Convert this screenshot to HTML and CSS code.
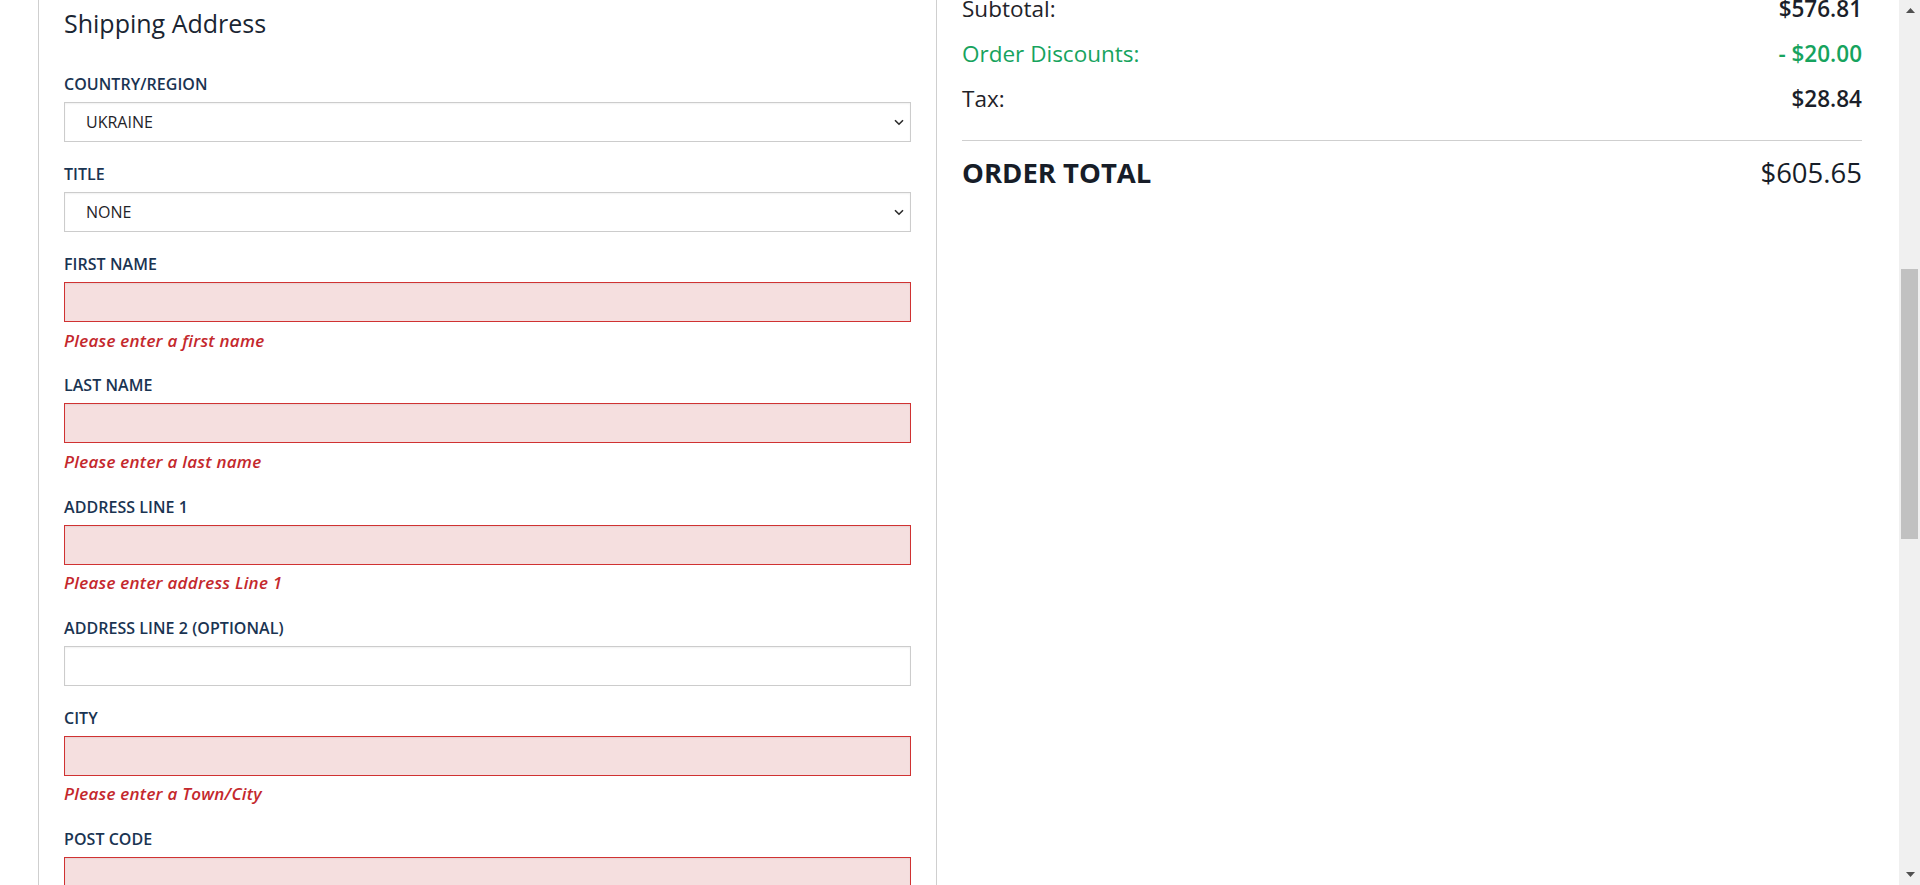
FILE: index.html
```html
<!DOCTYPE html>
<html lang="en">
<head>
<meta charset="utf-8">
<title>Checkout - Shipping Address</title>
<link rel="stylesheet" href="styles.css">
</head>
<body>
<div class="viewport">
  <div class="page">
    <div class="layout">
      <section class="left">
        <h2 class="heading">Shipping Address</h2>

        <div class="field">
          <label class="label" for="country">COUNTRY/REGION</label>
          <div class="select-wrap">
            <select id="country" class="control select"><option>UKRAINE</option></select>
            <svg class="chevron" width="10" height="7" viewBox="0 0 10 7"><polyline points="1,1.2 5,5.2 9,1.2" fill="none" stroke="#2b2b2b" stroke-width="1.6"/></svg>
          </div>
        </div>

        <div class="field">
          <label class="label" for="title">TITLE</label>
          <div class="select-wrap">
            <select id="title" class="control select"><option>NONE</option></select>
            <svg class="chevron" width="10" height="7" viewBox="0 0 10 7"><polyline points="1,1.2 5,5.2 9,1.2" fill="none" stroke="#2b2b2b" stroke-width="1.6"/></svg>
          </div>
        </div>

        <div class="field">
          <label class="label" for="fname">FIRST NAME</label>
          <input id="fname" class="control invalid" type="text">
          <div class="error">Please enter a first name</div>
        </div>

        <div class="field">
          <label class="label" for="lname">LAST NAME</label>
          <input id="lname" class="control invalid" type="text">
          <div class="error">Please enter a last name</div>
        </div>

        <div class="field">
          <label class="label" for="addr1">ADDRESS LINE 1</label>
          <input id="addr1" class="control invalid" type="text">
          <div class="error">Please enter address Line 1</div>
        </div>

        <div class="field">
          <label class="label" for="addr2">ADDRESS LINE 2 (OPTIONAL)</label>
          <input id="addr2" class="control" type="text">
        </div>

        <div class="field">
          <label class="label" for="city">CITY</label>
          <input id="city" class="control invalid" type="text">
          <div class="error">Please enter a Town/City</div>
        </div>

        <div class="field">
          <label class="label" for="post">POST CODE</label>
          <input id="post" class="control invalid" type="text">
        </div>
      </section>

      <section class="right">
        <div class="row"><span>Subtotal:</span><span class="val">$576.81</span></div>
        <div class="row discount"><span>Order Discounts:</span><span class="val">- $20.00</span></div>
        <div class="row"><span>Tax:</span><span class="val">$28.84</span></div>
        <hr class="rule">
        <div class="total"><span class="total-label">ORDER TOTAL</span><span class="total-val">$605.65</span></div>
      </section>
    </div>
  </div>

  <div class="scrollbar">
    <svg class="arrow-up" width="9" height="5" viewBox="0 0 9 5"><polygon points="0,5 9,5 4.5,0" fill="#505050"/></svg>
    <div class="thumb"></div>
    <svg class="arrow-down" width="9" height="5" viewBox="0 0 9 5"><polygon points="0,0 9,0 4.5,5" fill="#505050"/></svg>
  </div>
</div>
</body>
</html>
```
FILE: styles.css
```css
html, body {
  margin: 0;
  padding: 0;
  height: 100%;
  overflow: hidden;
  background: #ffffff;
}

body {
  font-family: "Open Sans", "Noto Sans", sans-serif;
  color: #222;
}

.viewport {
  display: flex;
  height: 885px;
  overflow: hidden;
}

.page {
  flex: 1;
  overflow: hidden;
}

.layout {
  display: flex;
  margin: -20px 37px 0 38px;
}

.left {
  width: 899px;
  flex: none;
  box-sizing: border-box;
  border-left: 1px solid #cfcfcf;
  border-right: 1px solid #cfcfcf;
  padding: 27px 25px 0 25px;
  min-height: 1000px;
}

.heading {
  margin: 0 0 35px 0;
  font-size: 25px;
  line-height: 32px;
  font-weight: 400;
  color: #1a2532;
}

.field {
  margin-bottom: 22px;
}

.label {
  display: block;
  font-size: 16px;
  line-height: 20px;
  font-weight: 600;
  letter-spacing: 0.05px;
  color: #1a3452;
  margin-bottom: 8px;
}

.control {
  display: block;
  width: 100%;
  height: 40px;
  box-sizing: border-box;
  margin: 0;
  border: 1px solid #cccccc;
  border-radius: 0;
  background: #ffffff;
  box-shadow: inset 0 1px 2px rgba(0, 0, 0, 0.06);
  font-family: "Open Sans", "Noto Sans", sans-serif;
  font-size: 16px;
  color: #222;
  outline: none;
}

.select-wrap {
  position: relative;
}

.select {
  appearance: none;
  -webkit-appearance: none;
  padding: 0 30px 0 21px;
  line-height: 38px;
  color: #1f2328;
}

.chevron {
  position: absolute;
  right: 7px;
  top: 17px;
  pointer-events: none;
}

.invalid {
  background: #f5dfdf;
  border-color: #d03232;
}

.error {
  margin: 8.5px 0 0 0;
  padding-bottom: 2.8px;
  font-size: 17px;
  line-height: 20px;
  letter-spacing: 0.25px;
  font-style: italic;
  font-weight: 600;
  color: #c4282d;
}

.right {
  flex: 1;
  padding: 14px 0 0 25px;
}

.row {
  display: flex;
  justify-content: space-between;
  font-size: 22.5px;
  line-height: 30px;
  margin-bottom: 15px;
  color: #1f2329;
}

.row:nth-of-type(3) {
  margin-bottom: 0;
}

.val {
  font-weight: 600;
  color: #1b1f2a;
}

.discount,
.discount .val {
  color: #17a35e;
}

.rule {
  border: 0;
  border-top: 1px solid #cfcfcf;
  margin: 26px 0 0 0;
  height: 0;
}

.total {
  display: flex;
  justify-content: space-between;
  margin-top: 14px;
  font-size: 27.5px;
  line-height: 36px;
  color: #171d28;
}

.total-label {
  font-weight: 700;
}

.total-val {
  font-weight: 400;
}

.scrollbar {
  width: 21px;
  flex: none;
  background: #f0f0f0;
  display: flex;
  flex-direction: column;
  align-items: center;
  box-sizing: border-box;
  padding: 8px 0 8px 0;
}

.arrow-up {
  flex: none;
  margin-left: 1px;
}

.thumb {
  flex: none;
  width: 17px;
  height: 270px;
  margin-top: 256px;
  background: #c1c1c1;
}

.arrow-down {
  flex: none;
  margin-top: auto;
  margin-left: 1px;
}
```
